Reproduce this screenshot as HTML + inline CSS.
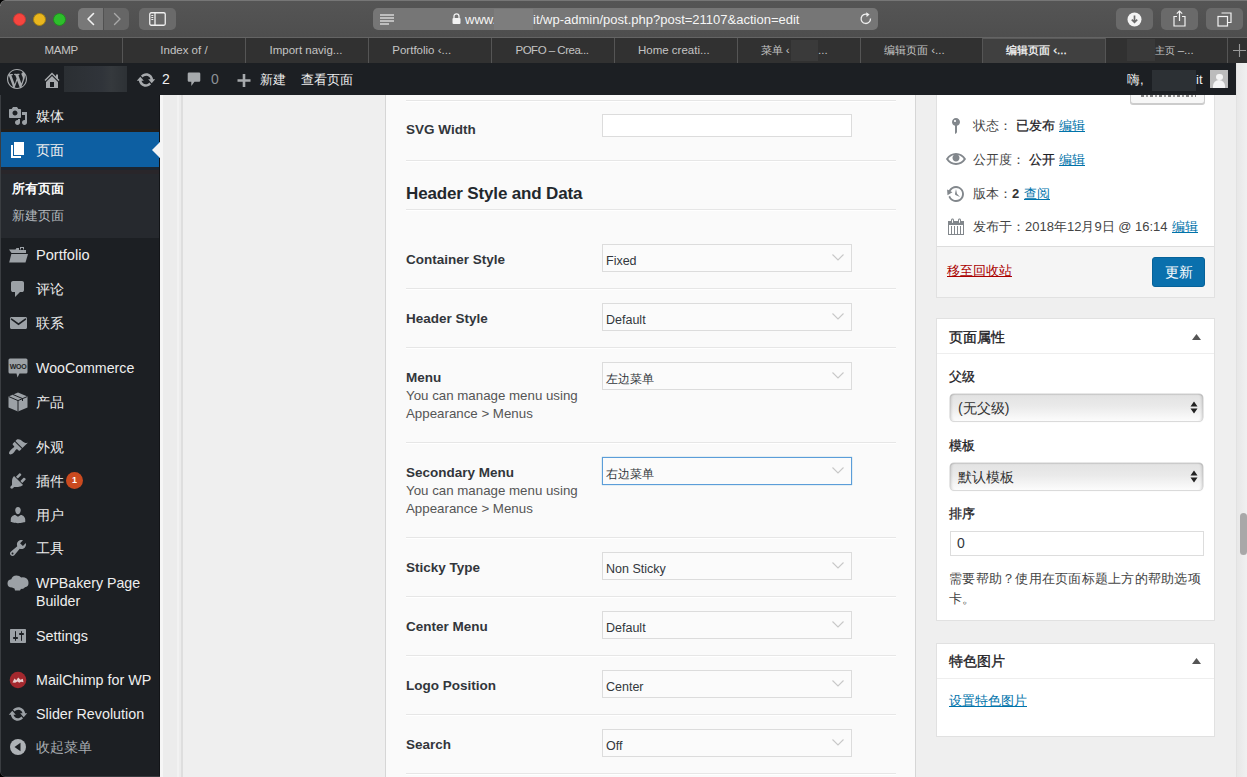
<!DOCTYPE html>
<html><head><meta charset="utf-8"><style>
*{box-sizing:border-box;margin:0;padding:0}
html,body{width:1247px;height:777px;overflow:hidden;background:#efefef;font-family:"Liberation Sans",sans-serif;position:relative}
.a{position:absolute}
svg{display:block}
.nw{white-space:nowrap}
#titlebar{left:0;top:0;width:1247px;height:38px;background:linear-gradient(#555,#4e4e4e);border-top:1px solid #767676;border-bottom:1px solid #646464}
.tbtn{background:#6a6a6a;border-radius:5px}
#tabbar{left:0;top:38px;width:1247px;height:25px;background:#313131}
.tab{top:0;height:25px;width:123px;border-left:1px solid #555;color:#c4c4c4;font-size:11.7px;line-height:25px;text-align:center;white-space:nowrap}
#adminbar{z-index:5;left:0;top:63px;width:1236px;height:32px;background:#1c1f23;color:#eee;font-size:13px}
#side{left:0;top:95px;width:160px;height:682px;background:#1c1f23}
.mi{left:36px;height:20px;line-height:20px;font-size:14px;color:#eee;white-space:nowrap;font-weight:500}
.ic{left:0;width:36px;height:34px;display:flex;align-items:center;justify-content:center}
#mainbox{left:385px;top:95px;width:531px;height:700px;background:#fafafa;border-left:1px solid #d6d6d6;border-right:1px solid #d6d6d6}
.sep{left:406px;width:490px;height:2px;border-top:1px solid #e6e6e6;background:#fff}
.lbl{left:406px;height:20px;line-height:20px;font-size:13.5px;font-weight:700;color:#32363b;white-space:nowrap}
.desc{left:406px;height:18px;line-height:18px;font-size:13.3px;color:#555;white-space:nowrap}
.sel{left:602px;width:250px;height:28px;border:1px solid #dcdcdc;background:#fbfbfb;font-size:12.5px;color:#32373c;line-height:28px;padding-top:2px;padding-left:3px;white-space:nowrap}
.sel svg{position:absolute;right:7px;top:9px}
.box{background:#fff;border:1px solid #e1e1e1}
.pub{height:20px;line-height:20px;font-size:13px;color:#444;white-space:nowrap}
.lk{color:#0073aa;text-decoration:underline}
.rl{left:949px;height:20px;line-height:20px;font-size:13px;font-weight:400;color:#1d2125;-webkit-text-stroke:0.3px #1d2125;white-space:nowrap}
.msel{left:950px;width:253px;height:27px;border-radius:4px;background:linear-gradient(#e2e2e2,#eaeaea 45%,#fcfcfc);box-shadow:inset 0 1px 1px rgba(0,0,0,.12),inset 4px 0 3px -3px rgba(0,0,0,.18),inset -4px 0 3px -3px rgba(0,0,0,.18),0 0 0 0.5px #cfcfcf,0 1px 1px rgba(0,0,0,.12);font-size:14px;color:#333;line-height:29px;padding-left:8px;white-space:nowrap}

</style></head><body>
<div id="titlebar" class="a"></div>
<div class="a" style="left:0;top:0;width:6px;height:6px;background:radial-gradient(circle at 6px 6px,transparent 5px,#777 5.5px,#000 6.5px)"></div>
<div class="a" style="left:12.5px;top:12.5px;width:13px;height:13px;border-radius:50%;background:#f6453f;border:0.5px solid #c53a35"></div>
<div class="a" style="left:32.5px;top:12.5px;width:13px;height:13px;border-radius:50%;background:#e9b61e;border:0.5px solid #a88512"></div>
<div class="a" style="left:52.5px;top:12.5px;width:13px;height:13px;border-radius:50%;background:#2dbe2b;border:0.5px solid #1f8f1f"></div>
<div class="a tbtn" style="left:78px;top:8px;width:25px;height:22px;border-radius:5px 0 0 5px;background:#787878"></div>
<div class="a tbtn" style="left:104px;top:8px;width:25px;height:22px;border-radius:0 5px 5px 0;background:#666"></div>
<svg class="a" style="left:85px;top:12px" width="12" height="14" viewBox="0 0 12 14"><path d="M8.5 1.5 L3 7 L8.5 12.5" stroke="#f2f2f2" stroke-width="1.6" fill="none" stroke-linecap="round" stroke-linejoin="round"/></svg>
<svg class="a" style="left:111px;top:12px" width="12" height="14" viewBox="0 0 12 14"><path d="M3.5 1.5 L9 7 L3.5 12.5" stroke="#a9a9a9" stroke-width="1.4" fill="none" stroke-linecap="round" stroke-linejoin="round"/></svg>
<div class="a tbtn" style="left:139px;top:8px;width:37px;height:22px"></div>
<svg class="a" style="left:149px;top:12px" width="17" height="14" viewBox="0 0 17 14"><rect x="0.75" y="0.75" width="15.5" height="12.5" rx="1.5" stroke="#f0f0f0" stroke-width="1.3" fill="none"/><line x1="6" y1="1" x2="6" y2="13" stroke="#f0f0f0" stroke-width="1.3"/><line x1="2.3" y1="3.5" x2="4.3" y2="3.5" stroke="#f0f0f0" stroke-width="1"/><line x1="2.3" y1="5.5" x2="4.3" y2="5.5" stroke="#f0f0f0" stroke-width="1"/><line x1="2.3" y1="7.5" x2="4.3" y2="7.5" stroke="#f0f0f0" stroke-width="1"/></svg>
<div class="a" style="left:373px;top:8px;width:505px;height:22px;background:#767676;border-radius:5px"></div>
<svg class="a" style="left:380px;top:14px" width="15" height="11" viewBox="0 0 15 11"><g stroke="#eee" stroke-width="1.2"><line x1="0" y1="1" x2="14" y2="1"/><line x1="0" y1="4" x2="14" y2="4"/><line x1="0" y1="7" x2="14" y2="7"/><line x1="0" y1="10" x2="9" y2="10"/></g></svg>
<svg class="a" style="left:452px;top:13px" width="9" height="11" viewBox="0 0 9 11"><path d="M2 5 V3.3 A2.5 2.5 0 0 1 7 3.3 V5" stroke="#f2f2f2" stroke-width="1.3" fill="none"/><rect x="0.5" y="5" width="8" height="6" rx="1" fill="#f2f2f2"/></svg>
<div class="a nw" style="left:465px;top:11px;font-size:13px;line-height:18px;color:#f5f5f5">www.</div>
<div class="a" style="left:494px;top:9px;width:39px;height:21px;background:#7d7d7d"></div>
<div class="a nw" style="left:533px;top:11px;font-size:13px;line-height:18px;color:#f5f5f5">it/wp-admin/post.php?post=21107&amp;action=edit</div>
<svg class="a" style="left:859px;top:12px" width="14" height="14" viewBox="0 0 14 14"><path d="M11.5 6.5 A4.7 4.7 0 1 1 8.5 2.4" stroke="#eee" stroke-width="1.3" fill="none"/><path d="M7.2 0.3 L10.6 2.4 L7.6 4.9 Z" fill="#eee"/></svg>
<div class="a tbtn" style="left:1116px;top:8px;width:37px;height:22px"></div>
<div class="a tbtn" style="left:1161px;top:8px;width:37px;height:22px"></div>
<div class="a tbtn" style="left:1206px;top:8px;width:37px;height:22px"></div>
<svg class="a" style="left:1127px;top:12px" width="15" height="15" viewBox="0 0 15 15"><circle cx="7.5" cy="7.5" r="7" fill="#f4f4f4"/><path d="M7.5 3.5 V10 M4.8 7.6 L7.5 10.4 L10.2 7.6" stroke="#6b6b6b" stroke-width="1.7" fill="none"/></svg>
<svg class="a" style="left:1173px;top:10px" width="13" height="17" viewBox="0 0 13 17"><path d="M4 6.5 H1 V16 H12 V6.5 H9" stroke="#f2f2f2" stroke-width="1.2" fill="none"/><path d="M6.5 1 V11 M3.8 3.6 L6.5 1 L9.2 3.6" stroke="#f2f2f2" stroke-width="1.2" fill="none"/></svg>
<svg class="a" style="left:1217px;top:12px" width="15" height="15" viewBox="0 0 15 15"><rect x="1" y="4.5" width="9.5" height="9.5" stroke="#f2f2f2" stroke-width="1.2" fill="none"/><path d="M4.5 1 H14 V10.5 H11" stroke="#f2f2f2" stroke-width="1.2" fill="none"/></svg>
<div id="tabbar" class="a">
<div class="a" style="left:982px;top:0;width:123px;height:25px;background:#404040;border-top:1px solid #5a5a5a"></div>
<div class="a" style="left:122px;top:0;width:1px;height:25px;background:#555"></div>
<div class="a" style="left:245px;top:0;width:1px;height:25px;background:#555"></div>
<div class="a" style="left:368px;top:0;width:1px;height:25px;background:#555"></div>
<div class="a" style="left:491px;top:0;width:1px;height:25px;background:#555"></div>
<div class="a" style="left:614px;top:0;width:1px;height:25px;background:#555"></div>
<div class="a" style="left:737px;top:0;width:1px;height:25px;background:#555"></div>
<div class="a" style="left:860px;top:0;width:1px;height:25px;background:#555"></div>
<div class="a" style="left:982px;top:0;width:1px;height:25px;background:#555"></div>
<div class="a" style="left:1105px;top:0;width:1px;height:25px;background:#555"></div>
<div class="a" style="left:1227px;top:0;width:1px;height:25px;background:#555"></div>
<div class="a nw" style="left:44.4px;top:4px;font-size:11.5px;line-height:17px;color:#c4c4c4;letter-spacing:-0.2px">MAMP</div>
<div class="a nw" style="left:160.3px;top:4px;font-size:11.5px;line-height:17px;color:#c4c4c4;">Index of /</div>
<div class="a nw" style="left:269.5px;top:4px;font-size:11.5px;line-height:17px;color:#c4c4c4;">Import navig...</div>
<div class="a nw" style="left:392.3px;top:4px;font-size:11.5px;line-height:17px;color:#c4c4c4;">Portfolio ‹...</div>
<div class="a nw" style="left:515.5px;top:4px;font-size:11.5px;line-height:17px;color:#c4c4c4;letter-spacing:-0.5px">POFO – Crea...</div>
<div class="a nw" style="left:638px;top:4px;font-size:11.5px;line-height:17px;color:#c4c4c4;">Home creati...</div>
<div class="a nw" style="left:760.5px;top:4px;font-size:11.5px;line-height:17px;color:#c4c4c4;"><span style="font-size:11px">菜单</span> ‹</div>
<div class="a" style="left:791px;top:2px;width:27px;height:21px;background:#3a3a3a"></div>
<div class="a nw" style="left:818px;top:4px;font-size:11.5px;line-height:17px;color:#c4c4c4;">...</div>
<div class="a nw" style="left:884px;top:4px;font-size:11.5px;line-height:17px;color:#c4c4c4;"><span style="font-size:10.8px">编辑页面</span> ‹...</div>
<div class="a nw" style="left:1006px;top:4px;font-size:11.5px;line-height:17px;color:#fafafa;-webkit-text-stroke:0.25px #fafafa"><span style="font-size:10.8px">编辑页面</span> ‹...</div>
<div class="a" style="left:1127px;top:1px;width:28px;height:22px;background:#393939"></div>
<div class="a nw" style="left:1154.5px;top:4px;font-size:11.5px;line-height:17px;color:#c4c4c4;"><span style="font-size:10px">主页</span> –...</div>
<svg class="a" style="left:1233px;top:6px" width="13" height="13" viewBox="0 0 13 13"><path d="M6.5 0 V13 M0 6.5 H13" stroke="#9a9a9a" stroke-width="1.1"/></svg>
</div>
<div id="adminbar" class="a">
<svg class="a" style="left:7px;top:6px" width="20" height="20" viewBox="0 0 20 20" fill="#a7aaad"><path d="M20 10c0-5.51-4.49-10-10-10C4.48 0 0 4.49 0 10c0 5.52 4.48 10 10 10 5.51 0 10-4.48 10-10zM7.78 15.37L4.37 6.22c.55-.02 1.170-.08 1.17-.08.5-.06.44-1.13-.06-1.11 0 0-1.45.11-2.37.11-.18 0-.37 0-.58-.01C4.12 2.69 6.870 1.11 10 1.11c2.33 0 4.45.87 6.05 2.340-.68-.11-1.65.39-1.65 1.58 0 .74.45 1.36.9 2.1.35.61.55 1.36.55 2.46 0 1.49-1.4 5-1.4 5l-3.03-8.37c.54-.02.82-.17.82-.17.5-.05.44-1.25-.06-1.22 0 0-1.44.12-2.38.12-.87 0-2.33-.12-2.33-.12-.5-.03-.56 1.2-.06 1.22l.92.08 1.26 3.41zM17.41 10c.24-.64.74-1.87.43-4.25.7 1.29 1.05 2.71 1.05 4.25 0 3.29-1.73 6.24-4.4 7.78.97-2.59 1.94-5.2 2.92-7.78zM6.1 18.09C3.12 16.65 1.11 13.53 1.11 10c0-1.3.23-2.48.72-3.59 1.42 3.89 2.84 7.79 4.27 11.68zm4.03-6.63l2.58 6.98c-.86.29-1.76.45-2.71.45-.79 0-1.57-.11-2.29-.33.81-2.38 1.62-4.74 2.42-7.1z"/></svg>
<svg class="a" style="left:42px;top:7px" width="20" height="20" viewBox="0 0 20 20" fill="#a7aaad"><path d="M16 8.5l1.53 1.53-1.06 1.06L10 4.62l-6.47 6.47-1.06-1.06L10 2.5l4 4v-2h2v4zm-6-2.46l6 5.99V18H4v-5.97zM12 17v-5H8v5h4z"/></svg>
<div class="a" style="left:64px;top:3px;width:63px;height:26px;background:linear-gradient(90deg,#2b2f33,#30343a 60%,#35393d 75%,#2d3135)"></div>
<svg class="a" style="left:136px;top:7px" width="20" height="20" viewBox="0 0 20 20" fill="#a7aaad"><path d="M10.2 3.28c3.53 0 6.43 2.61 6.92 6h2.08l-3.5 4-3.5-4h2.32c-.45-1.97-2.21-3.45-4.32-3.45-1.45 0-2.73.71-3.54 1.78L4.95 5.66C6.23 4.2 8.11 3.28 10.2 3.28zm-.4 13.44c-3.52 0-6.43-2.61-6.92-6H.8l3.5-4c1.17 1.33 2.33 2.67 3.5 4H5.48c.45 1.97 2.21 3.45 4.32 3.45 1.45 0 2.730-.71 3.54-1.78l1.71 1.95c-1.28 1.46-3.15 2.38-5.25 2.38z"/></svg>
<div class="a nw" style="left:162px;top:7px;font-size:14px;line-height:18px;color:#f0f0f0">2</div>
<svg class="a" style="left:187px;top:9px" width="14" height="15" viewBox="0 0 14 15"><path d="M2 0.5 H12 Q13.3 0.5 13.3 1.8 V8.5 Q13.3 9.8 12 9.8 H7.5 L4.3 14 V9.8 H2 Q0.7 9.8 0.7 8.5 V1.8 Q0.7 0.5 2 0.5 Z" fill="#a7aaad"/></svg>
<div class="a nw" style="left:211px;top:7px;font-size:14px;line-height:18px;color:#8d9196">0</div>
<svg class="a" style="left:237px;top:11px" width="14" height="13" viewBox="0 0 14 13"><path d="M7 0 V13 M0.5 6.5 H13.5" stroke="#a7aaad" stroke-width="2.6"/></svg>
<div class="a nw" style="left:260px;top:7px;font-size:13px;line-height:20px;color:#eee">新建</div>
<div class="a nw" style="left:301px;top:7px;font-size:13px;line-height:20px;color:#eee">查看页面</div>
<div class="a nw" style="left:1127px;top:7px;font-size:13px;line-height:20px;color:#eee">嗨,</div>
<div class="a" style="left:1152px;top:7px;width:44px;height:21px;background:#2c3034"></div>
<div class="a nw" style="left:1196px;top:7px;font-size:13px;line-height:20px;color:#eee">it</div>
<div class="a" style="left:1210px;top:7px;width:18px;height:18px;background:#bcbcbc;overflow:hidden"><div class="a" style="left:6px;top:3.5px;width:6.5px;height:6.5px;border-radius:50%;background:#f4f4f4"></div><div class="a" style="left:3px;top:10px;width:12px;height:9px;border-radius:6px 6px 1px 1px;background:#f4f4f4"></div></div>
</div>
<div id="side" class="a"></div>
<div class="a" style="left:0;top:129px;width:160px;height:3px;background:#221f1c"></div>
<div class="a" style="left:0;top:132px;width:160px;height:35px;background:#0d5fa2"></div>
<div class="a" style="left:0;top:167px;width:160px;height:3px;background:#1c2530"></div>
<div class="a" style="left:0;top:170px;width:160px;height:4px;background:#29262a"></div>
<div class="a" style="left:152px;top:142px;width:0;height:0;border-top:8px solid transparent;border-bottom:8px solid transparent;border-right:8px solid #f3f3f3"></div>
<div class="a" style="left:0;top:174px;width:160px;height:64px;background:#26292e"></div>
<div class="a mi" style="top:106px;color:#eee;">媒体</div>
<div class="a" style="left:8px;top:106px"><svg width="20" height="20" viewBox="0 0 20 20" fill="#9ca1a6"><path d="M13 11V4c0-.55-.45-1-1-1h-1.67L9 1H5L3.67 3H2c-.55 0-1 .45-1 1v7c0 .55.45 1 1 1h10c.55 0 1-.45 1-1zM7 4.5c1.38 0 2.5 1.12 2.5 2.5S8.38 9.5 7 9.5 4.5 8.38 4.5 7 5.62 4.5 7 4.5zM14 6h5v10.5c0 1.38-1.12 2.5-2.5 2.5S14 17.88 14 16.5s1.12-2.5 2.5-2.5c.17 0 .34.02.5.05V9h-3V6zm-4 8.05V13h2v3.5c0 1.38-1.12 2.5-2.5 2.5S7 17.88 7 16.5s1.12-2.5 2.5-2.5c.17 0 .34.02.5.05z"/></svg></div>
<div class="a mi" style="top:140px;color:#eee;">页面</div>
<div class="a" style="left:8px;top:140px"><svg width="20" height="20" viewBox="0 0 20 20" fill="#fff"><path d="M6 15V2h10v13H6zm-1 1h8v2H3V5h2v11z"/></svg></div>
<div class="a mi" style="left:12px;top:179px;font-size:13px;font-weight:700;color:#fff">所有页面</div>
<div class="a mi" style="left:12px;top:206px;font-size:13px;color:#b4b9be">新建页面</div>
<div class="a mi" style="top:245px;color:#eee;font-size:14.6px">Portfolio</div>
<div class="a" style="left:8px;top:245px"><svg width="20" height="20" viewBox="0 0 20 20" fill="#9ca1a6"><path d="M1 4.5 H7.5 L8.5 3 H11 V5 H18 V8 H3.5 Z"/><path d="M12 2 H16 V4.5 H15 V3 H13 V4.5 H12 Z"/><path d="M3.3 9 H20 L17.5 17.5 H1.2 Z"/></svg></div>
<div class="a mi" style="top:279px;color:#eee;">评论</div>
<div class="a" style="left:8px;top:279px"><svg width="20" height="20" viewBox="0 0 20 20" fill="#9ca1a6"><path d="M5 2h9q.82 0 1.41.59T16 4v7q0 .82-.59 1.41T14 13h-2l-5 5v-5H5q-.82 0-1.41-.59T3 11V4q0-.82.59-1.41T5 2z"/></svg></div>
<div class="a mi" style="top:313px;color:#eee;">联系</div>
<div class="a" style="left:8px;top:313px"><svg width="20" height="20" viewBox="0 0 20 20" fill="#9ca1a6"><path d="M19 14.5v-9c0-.83-.67-1.5-1.5-1.5H3.49c-.83 0-1.5.67-1.5 1.5v9c0 .83.67 1.5 1.5 1.5H17.5c.83 0 1.5-.67 1.5-1.5z"/><path d="M3.5 6.2 L10.5 11.2 L17.5 6.2" stroke="#1c1f23" stroke-width="1.6" fill="none" stroke-linecap="round"/></svg></div>
<div class="a mi" style="top:358px;color:#eee;font-size:14.2px">WooCommerce</div>
<div class="a" style="left:8px;top:358px"><svg width="20" height="20" viewBox="0 0 20 20" fill="#9ca1a6"><path d="M2 0.5 H18 Q19.5 0.5 19.5 2 V14 Q19.5 15.5 18 15.5 H11.5 L9.5 19.5 L8.5 15.5 H2 Q0.5 15.5 0.5 14 V2 Q0.5 0.5 2 0.5 Z"/><text x="10" y="10.8" font-family="Liberation Sans" font-size="7" font-weight="700" text-anchor="middle" fill="#1c1f23" letter-spacing="-0.3">WOO</text></svg></div>
<div class="a mi" style="top:392px;color:#eee;">产品</div>
<div class="a" style="left:8px;top:392px"><svg width="20" height="20" viewBox="0 0 20 20" fill="#9ca1a6"><path d="M10 0.5 L19.5 4.5 V15.5 L10 19.5 L0.5 15.5 V4.5 Z"/><path d="M0.8 4.6 L10 8.6 L19.2 4.6 M10 8.6 V19.5 M5 2.5 L14.5 6.6 V9" stroke="#1c1f23" stroke-width="1" fill="none"/></svg></div>
<div class="a mi" style="top:437px;color:#eee;">外观</div>
<div class="a" style="left:8px;top:437px"><svg width="20" height="20" viewBox="0 0 20 20" fill="#9ca1a6"><path d="M14.48 11.06L7.41 3.99l1.5-1.5c.5-.56 2.3-.47 3.51.32 1.21.8 1.43 1.28 2.91 2.1 1.18.64 2.45 1.26 4.45.85zm-.71.71L6.7 4.7 4.93 6.47c-.39.39-.39 1.02 0 1.41l1.06 1.06c.39.39.39 1.03 0 1.42-.6.6-1.43 1.11-2.21 1.69-.35.26-.7.53-1.010.84C1.43 14.23.4 16.08 1.4 17.07c.99 1 2.84-.03 4.18-1.36.31-.31.58-.66.85-1.02.57-.78 1.08-1.61 1.69-2.21.39-.39 1.02-.39 1.41 0l1.06 1.06c.39.39 1.02.39 1.41 0z"/></svg></div>
<div class="a mi" style="top:471px;color:#eee;">插件</div>
<div class="a" style="left:8px;top:471px"><svg width="20" height="20" viewBox="0 0 20 20" fill="#9ca1a6"><path d="M13.11 4.36L9.87 7.6 8 5.73l3.24-3.24c.35-.34 1.05-.2 1.56.32.52.51.66 1.21.31 1.55zm-8 1.77l.91-1.12 9.01 9.01-1.19.84c-.71.71-2.63 1.16-3.82 1.16H6.14L4.9 17.26c-.59.59-1.54.59-2.12 0-.59-.58-.59-1.53 0-2.12l1.24-1.24v-3.88c0-1.13.4-3.19 1.09-3.89zm7.26 3.97l3.24-3.24c.34-.35 1.040-.21 1.55.31.52.51.66 1.21.31 1.55l-3.24 3.25z"/></svg></div>
<div class="a" style="left:66px;top:472px;width:17px;height:17px;border-radius:50%;background:#ca4a1f;color:#fff;font-size:9px;font-weight:700;line-height:17px;text-align:center">1</div>
<div class="a mi" style="top:505px;color:#eee;">用户</div>
<div class="a" style="left:8px;top:505px"><svg width="20" height="20" viewBox="0 0 20 20" fill="#9ca1a6"><path d="M10 9.25c-2.27 0-2.73-3.44-2.73-3.44C7 4.02 7.82 2 9.97 2c2.16 0 2.98 2.02 2.71 3.81 0 0-.41 3.44-2.68 3.44zm0 2.57L12.72 10c2.39 0 4.52 2.33 4.52 4.53v2.49s-3.65 1.13-7.24 1.130c-3.65 0-7.24-1.13-7.24-1.13v-2.49c0-2.25 1.94-4.48 4.47-4.48z"/></svg></div>
<div class="a mi" style="top:538px;color:#eee;">工具</div>
<div class="a" style="left:8px;top:538px"><svg width="20" height="20" viewBox="0 0 20 20" fill="#9ca1a6"><path d="M16.68 9.77c-1.34 1.34-3.3 1.67-4.95.99l-5.41 6.52c-.99.99-2.59.99-3.58 0s-.99-2.59 0-3.57l6.52-5.42c-.68-1.65-.35-3.61.99-4.95 1.28-1.28 3.12-1.62 4.72-1.06l-2.89 2.89 2.82 2.82 2.86-2.87c.53 1.58.18 3.39-1.080 4.65zM3.81 16.21c.4.39 1.04.39 1.43 0 .4-.4.4-1.04 0-1.43-.39-.4-1.03-.4-1.43 0-.39.39-.39 1.03 0 1.43z"/></svg></div>
<div class="a mi" style="top:574px;height:36px;line-height:18px;font-size:14.2px">WPBakery Page<br>Builder</div>
<div class="a" style="left:7px;top:573px"><svg width="22" height="20" viewBox="0 0 22 20" fill="#9ca1a6"><path d="M5 14.5 Q0.5 14.5 0.5 10.5 Q0.5 6.8 4.3 6.3 Q5.2 2.5 9.5 2.5 Q12.6 2.5 14.2 4.6 Q15.6 3.8 17.6 4.6 Q21.5 5.8 21.5 10 Q21.5 13.8 18 14.3 Q16.5 16.3 14 15.8 L13 17.5 H8 L7.5 15.6 Q6 15.2 5 14.5 Z"/></svg></div>
<div class="a mi" style="top:626px;color:#eee;font-size:14.4px">Settings</div>
<div class="a" style="left:8px;top:626px"><svg width="20" height="20" viewBox="0 0 20 20" fill="#9ca1a6"><path d="M18 16V4c0-.55-.45-1-1-1H3c-.55 0-1 .45-1 1v12c0 .55.45 1 1 1h14c.55 0 1-.45 1-1zM8 11h1c.55 0 1 .45 1 1s-.45 1-1 1H8v1.5c0 .28-.22.5-.5.5s-.5-.22-.5-.5V13H6c-.55 0-1-.45-1-1s.45-1 1-1h1V5.5c0-.28.22-.5.5-.5s.5.22.5.5V11zm5-2h-1c-.55 0-1-.45-1-1s.45-1 1-1h1V5.5c0-.28.22-.5.5-.5s.5.22.5.5V7h1c.55 0 1 .45 1 1s-.45 1-1 1h-1v5.5c0 .28-.22.5-.5.5s-.5-.22-.5-.5V9z"/></svg></div>
<div class="a mi" style="top:670px;color:#eee;font-size:14.3px">MailChimp for WP</div>
<div class="a" style="left:8px;top:670px"><svg width="20" height="20" viewBox="0 0 20 20"><circle cx="10" cy="10" r="8.3" fill="#a3282e"/><path d="M4.5 12.5 L6.5 8.5 L8.3 10.2 L10.2 7.5 L12.5 9.8 L14.8 8.8 L15.5 12.2 L13 11.7 L11.2 12.8 L9.5 11.5 L7.2 12.8 Z" fill="#e9cfcf"/></svg></div>
<div class="a mi" style="top:704px;color:#eee;font-size:14.3px">Slider Revolution</div>
<div class="a" style="left:8px;top:704px"><svg width="20" height="20" viewBox="0 0 20 20" fill="#9ca1a6"><path d="M10.2 3.28c3.53 0 6.43 2.61 6.92 6h2.08l-3.5 4-3.5-4h2.32c-.45-1.97-2.21-3.45-4.32-3.45-1.45 0-2.73.71-3.54 1.78L4.95 5.66C6.23 4.2 8.11 3.28 10.2 3.28zm-.4 13.44c-3.52 0-6.43-2.61-6.92-6H.8l3.5-4c1.17 1.33 2.33 2.67 3.5 4H5.48c.45 1.97 2.21 3.45 4.32 3.45 1.45 0 2.730-.71 3.54-1.78l1.71 1.95c-1.28 1.46-3.15 2.38-5.25 2.38z"/></svg></div>
<div class="a mi" style="top:737px;color:#a8adb2;">收起菜单</div>
<div class="a" style="left:8px;top:737px"><svg width="20" height="20" viewBox="0 0 20 20" fill="#9ca1a6"><circle cx="10" cy="10" r="8" fill="#aeb2b6"/><path d="M12.5 5.8 V14.2 L6.5 10 Z" fill="#1c1f23"/></svg></div>
<div class="a" style="left:160px;top:95px;width:22px;height:682px;background:#ececec"></div>
<div class="a" style="left:160px;top:95px;width:3px;height:682px;background:#f6f6f6"></div>
<div class="a" style="left:177px;top:95px;width:2px;height:682px;background:#f2f2f2"></div>
<div class="a" style="left:181px;top:95px;width:2px;height:682px;background:#dedede"></div>
<div id="mainbox" class="a"></div>
<div class="a sep" style="top:100px"></div>
<div class="a sep" style="top:160px"></div>
<div class="a sep" style="top:209px"></div>
<div class="a sep" style="top:288px"></div>
<div class="a sep" style="top:347px"></div>
<div class="a sep" style="top:442px"></div>
<div class="a sep" style="top:537px"></div>
<div class="a sep" style="top:596px"></div>
<div class="a sep" style="top:655px"></div>
<div class="a sep" style="top:714px"></div>
<div class="a sep" style="top:773px"></div>
<div class="a lbl" style="top:120px">SVG Width</div>
<div class="a" style="left:602px;top:114px;width:250px;height:23px;border:1px solid #dcdcdc;background:#fff"></div>
<div class="a nw" style="left:406px;top:182.5px;font-size:17px;line-height:22px;font-weight:700;color:#23282d;letter-spacing:-0.15px">Header Style and Data</div>
<div class="a lbl" style="top:250px">Container Style</div>
<div class="a sel" style="top:244px;">Fixed<svg width="12" height="7" viewBox="0 0 12 7"><path d="M0.5 0.5 L6 6 L11.5 0.5" stroke="#c8c8c8" stroke-width="1.1" fill="none"/></svg></div>
<div class="a lbl" style="top:309px">Header Style</div>
<div class="a sel" style="top:303px;">Default<svg width="12" height="7" viewBox="0 0 12 7"><path d="M0.5 0.5 L6 6 L11.5 0.5" stroke="#c8c8c8" stroke-width="1.1" fill="none"/></svg></div>
<div class="a lbl" style="top:368px">Menu</div>
<div class="a desc" style="top:387px">You can manage menu using</div>
<div class="a desc" style="top:405px">Appearance &gt; Menus</div>
<div class="a sel" style="top:362px;"><span style="font-size:12px">左边菜单</span><svg width="12" height="7" viewBox="0 0 12 7"><path d="M0.5 0.5 L6 6 L11.5 0.5" stroke="#c8c8c8" stroke-width="1.1" fill="none"/></svg></div>
<div class="a lbl" style="top:463px">Secondary Menu</div>
<div class="a desc" style="top:482px">You can manage menu using</div>
<div class="a desc" style="top:500px">Appearance &gt; Menus</div>
<div class="a sel" style="top:457px;border-color:#5b9dd9;box-shadow:0 0 1px rgba(30,140,190,.6)"><span style="font-size:12px">右边菜单</span><svg width="12" height="7" viewBox="0 0 12 7"><path d="M0.5 0.5 L6 6 L11.5 0.5" stroke="#c8c8c8" stroke-width="1.1" fill="none"/></svg></div>
<div class="a lbl" style="top:558px">Sticky Type</div>
<div class="a sel" style="top:552px;">Non Sticky<svg width="12" height="7" viewBox="0 0 12 7"><path d="M0.5 0.5 L6 6 L11.5 0.5" stroke="#c8c8c8" stroke-width="1.1" fill="none"/></svg></div>
<div class="a lbl" style="top:617px">Center Menu</div>
<div class="a sel" style="top:611px;">Default<svg width="12" height="7" viewBox="0 0 12 7"><path d="M0.5 0.5 L6 6 L11.5 0.5" stroke="#c8c8c8" stroke-width="1.1" fill="none"/></svg></div>
<div class="a lbl" style="top:676px">Logo Position</div>
<div class="a sel" style="top:670px;">Center<svg width="12" height="7" viewBox="0 0 12 7"><path d="M0.5 0.5 L6 6 L11.5 0.5" stroke="#c8c8c8" stroke-width="1.1" fill="none"/></svg></div>
<div class="a lbl" style="top:735px">Search</div>
<div class="a sel" style="top:729px;">Off<svg width="12" height="7" viewBox="0 0 12 7"><path d="M0.5 0.5 L6 6 L11.5 0.5" stroke="#c8c8c8" stroke-width="1.1" fill="none"/></svg></div>
<div class="a box" style="left:936px;top:80px;width:279px;height:218px;border-top:none"></div>
<div class="a" style="left:1130px;top:80px;width:75px;height:24px;border:1px solid #ccc;border-radius:3px;background:#f7f7f7;box-shadow:0 1px 0 #ccc"></div>
<div class="a" style="left:1141px;top:95px;width:55px;height:2px;background:repeating-linear-gradient(90deg,#555 0 3px,transparent 3px 5px,#777 5px 7px,transparent 7px 9px);opacity:.7"></div>
<div class="a" style="left:946px;top:116px"><svg width="20" height="20" viewBox="0 0 20 20" fill="#82878c"><path d="M14 6c0 1.86-1.28 3.41-3 3.86V16c0 1-2 2-2 2V9.86c-1.72-.45-3-2-3-3.860 0-2.21 1.79-4 4-4s4 1.79 4 4zM8 5c0 .55.45 1 1 1s1-.45 1-1-.45-1-1-1-1 .45-1 1z"/></svg></div>
<div class="a pub" style="left:973px;top:116px">状态：</div><div class="a pub" style="left:1016px;top:116px;color:#1d2125;-webkit-text-stroke:0.25px #1d2125">已发布</div><div class="a pub lk" style="left:1059px;top:116px">编辑</div>
<div class="a" style="left:946px;top:149px"><svg width="20" height="20" viewBox="0 0 20 20" fill="#82878c"><path d="M19.7 9.4C17.7 6 14 3.9 10 3.9S2.3 6 .3 9.4L0 10l.3.6c2 3.4 5.7 5.5 9.7 5.5s7.7-2.1 9.7-5.5l.3-.6-.3-.6zM10 14.1c-3.1 0-6-1.6-7.7-4.1C3.6 8 5.7 6.6 8 6.1c-.9.6-1.5 1.7-1.5 2.9 0 1.9 1.6 3.5 3.5 3.5s3.5-1.6 3.5-3.5c0-1.2-.6-2.3-1.5-2.9 2.3.5 4.4 1.9 5.7 3.9-1.7 2.5-4.6 4.1-7.7 4.1z"/></svg></div>
<div class="a pub" style="left:973px;top:150px">公开度：</div><div class="a pub" style="left:1029px;top:150px;color:#1d2125;-webkit-text-stroke:0.25px #1d2125">公开</div><div class="a pub lk" style="left:1059px;top:150px">编辑</div>
<div class="a" style="left:946px;top:184px"><svg width="20" height="20" viewBox="0 0 20 20" fill="#82878c"><path d="M13.65 2.88c3.93 2.01 5.48 6.84 3.47 10.77s-6.83 5.48-10.77 3.47c-1.870-.96-3.2-2.56-3.86-4.4l1.64-1.03c.45 1.57 1.52 2.95 3.08 3.76 3.01 1.54 6.69.35 8.23-2.66 1.55-3.01.36-6.69-2.65-8.24C9.78 3.01 6.1 4.2 4.56 7.21l1.88.97-4.95 3.08-.39-5.82 1.78.91C4.9 2.4 9.75.89 13.65 2.88zm-4.36 7.83C9.11 10.53 9 10.28 9 10c0-.07.03-.12.04-.19h-.01L10 5l.97 4.81L14 13l-4.5-2.12.02-.02c-.08-.04-.16-.09-.23-.15z"/></svg></div>
<div class="a pub" style="left:973px;top:184px">版本：</div><div class="a pub" style="left:1012px;top:184px;font-weight:700;color:#333">2</div><div class="a pub lk" style="left:1024px;top:184px">查阅</div>
<div class="a" style="left:946px;top:217px"><svg width="20" height="20" viewBox="0 0 20 20" fill="#82878c"><path d="M15 4h3v14H2V4h3V3c0-.83.67-1.5 1.5-1.5S8 2.17 8 3v1h4V3c0-.83.67-1.5 1.5-1.5S15 2.17 15 3v1zM6 3v2.5c0 .28.22.5.5.5s.5-.22.5-.5V3c0-.28-.22-.5-.5-.5S6 2.72 6 3zm7 0v2.5c0 .28.22.5.5.5s.5-.22.5-.5V3c0-.28-.22-.5-.5-.5s-.5.22-.5.5zm4 14V8H3v9h2V9h1v8h2V9h1v8h2V9h1v8h2V9h1v8h2z"/></svg></div>
<div class="a pub" style="left:973px;top:217px">发布于：2018年12月9日 @ 16:14</div><div class="a pub lk" style="left:1172px;top:217px">编辑</div>
<div class="a" style="left:937px;top:246px;width:277px;height:51px;background:#f5f5f5;border-top:1px solid #ddd"></div>
<div class="a pub" style="left:947px;top:261px;color:#a00;text-decoration:underline">移至回收站</div>
<div class="a" style="left:1152px;top:257px;width:53px;height:30px;background:#0a70ad;border:1px solid #066299;border-radius:3px;color:#fff;font-size:14px;line-height:28px;text-align:center">更新</div>
<div class="a box" style="left:936px;top:318px;width:279px;height:303px"></div>
<div class="a" style="left:937px;top:353px;width:277px;height:1px;background:#eee"></div>
<div class="a nw" style="left:949px;top:327px;font-size:14px;line-height:20px;color:#1d2125;-webkit-text-stroke:0.35px #1d2125">页面属性</div>
<div class="a" style="left:1192px;top:334px"><svg width="9" height="6" viewBox="0 0 9 6"><path d="M0 6 L4.5 0 L9 6 Z" fill="#555"/></svg></div>
<div class="a rl" style="top:367px">父级</div>
<div class="a msel" style="top:394px">(无父级)<svg class="a" style="left:240px;top:7px" width="8" height="13" viewBox="0 0 8 13"><path d="M0.5 5.5 L4 0.5 L7.5 5.5 Z M0.5 7.5 L4 12.5 L7.5 7.5 Z" fill="#222"/></svg></div>
<div class="a rl" style="top:436px">模板</div>
<div class="a msel" style="top:463px">默认模板<svg class="a" style="left:240px;top:7px" width="8" height="13" viewBox="0 0 8 13"><path d="M0.5 5.5 L4 0.5 L7.5 5.5 Z M0.5 7.5 L4 12.5 L7.5 7.5 Z" fill="#222"/></svg></div>
<div class="a rl" style="top:504px">排序</div>
<div class="a" style="left:950px;top:531px;width:254px;height:25px;border:1px solid #ddd;background:#fff;font-size:14px;line-height:23px;padding-left:6px;color:#32373c">0</div>
<div class="a" style="left:949px;top:569px;width:262px;font-size:13px;line-height:20px;color:#444;letter-spacing:0.25px">需要帮助？使用在页面标题上方的帮助选项卡。</div>
<div class="a box" style="left:936px;top:643px;width:279px;height:94px"></div>
<div class="a" style="left:937px;top:678px;width:277px;height:1px;background:#eee"></div>
<div class="a nw" style="left:949px;top:651px;font-size:14px;line-height:20px;color:#1d2125;-webkit-text-stroke:0.35px #1d2125">特色图片</div>
<div class="a" style="left:1192px;top:658px"><svg width="9" height="6" viewBox="0 0 9 6"><path d="M0 6 L4.5 0 L9 6 Z" fill="#555"/></svg></div>
<div class="a pub lk" style="left:949px;top:691px">设置特色图片</div>
<div class="a" style="left:159px;top:95px;width:1px;height:47px;background:#121417"></div>
<div class="a" style="left:159px;top:158px;width:1px;height:619px;background:#121417"></div>
<div class="a" style="left:0;top:63px;width:1px;height:714px;background:#3a3d41"></div>
<div class="a" style="left:0;top:776px;width:160px;height:1px;background:#383b3f"></div>
<div class="a" style="left:0;top:771px;width:6px;height:6px;background:radial-gradient(circle at 6px 0,transparent 5px,#3a3d41 5.5px,#000 6.5px)"></div>
<div class="a" style="left:1236px;top:63px;width:11px;height:714px;background:linear-gradient(90deg,#e8e8e8,#f0f0f0);border-left:1px solid #e2e2e2"></div>
<div class="a" style="left:1240px;top:513px;width:7px;height:42px;border-radius:4px;background:#a8a8a8"></div>
</body></html>
